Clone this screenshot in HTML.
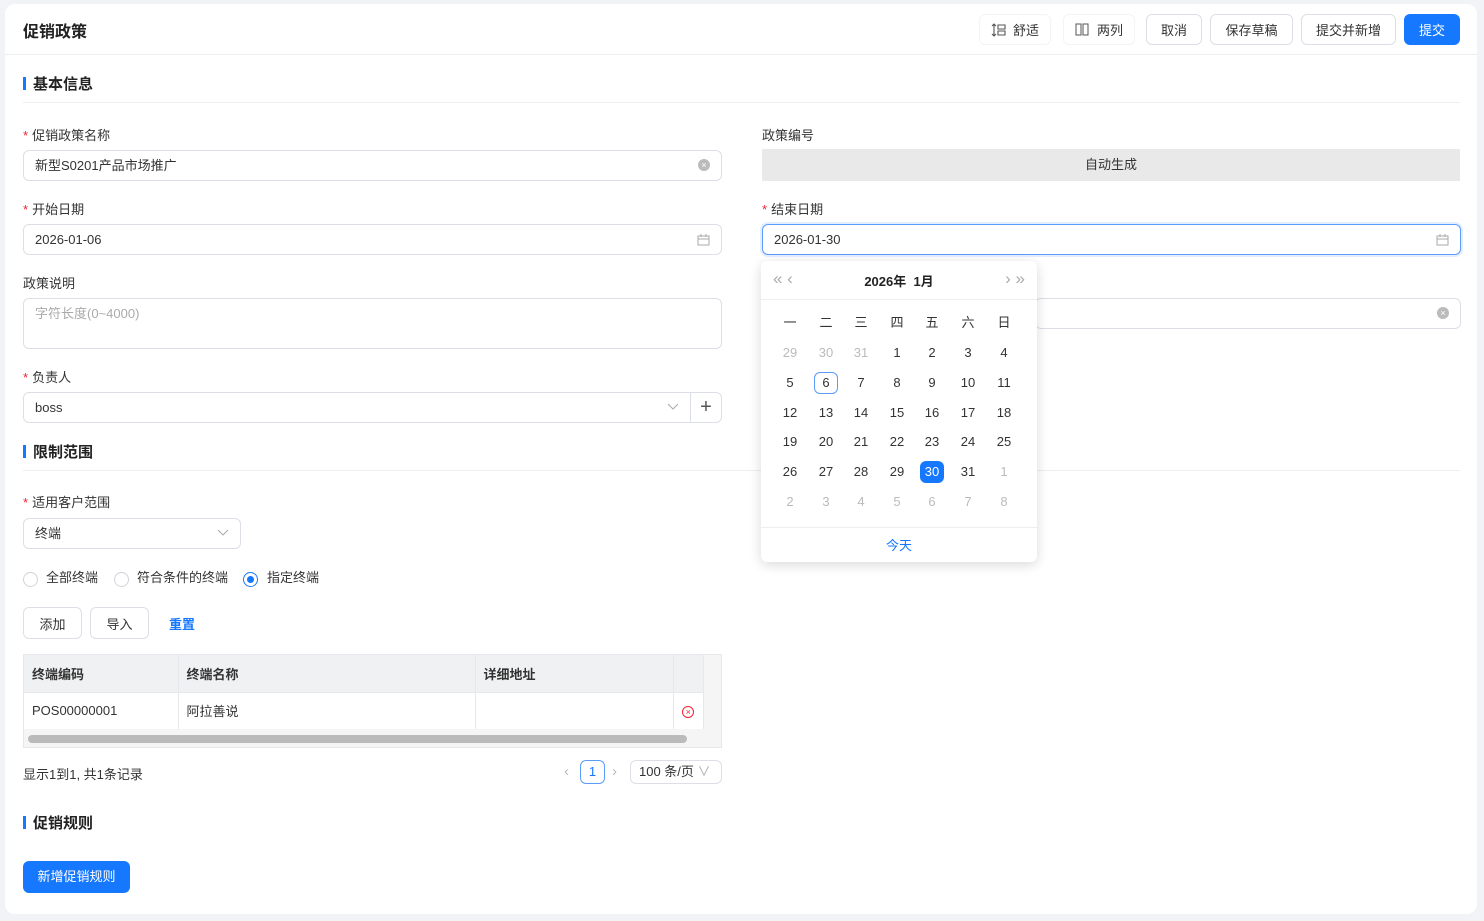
<!DOCTYPE html>
<html><head><meta charset="utf-8"><style>
*{box-sizing:border-box;margin:0;padding:0}
body{width:1484px;height:921px;background:#f2f3f6;font-family:"Liberation Sans","Noto Sans CJK SC",sans-serif;font-size:13px;color:#333;position:relative;overflow:hidden}
.card{position:absolute;left:5px;top:4px;width:1472px;height:910px;background:#fff;border-radius:10px}
.a{position:absolute}
.hdr{left:0;top:0;width:1472px;height:51px;border-bottom:1px solid #eceef2}
.btn{position:absolute;top:10px;height:31px;border:1px solid #dcdfe6;border-radius:6px;background:#fff;font-size:13px;color:#333;display:flex;align-items:center;justify-content:center}
.sec{font-size:15px;font-weight:bold;color:#222;padding-left:10px}
.sec:before{content:"";position:absolute;left:0;top:4px;width:3px;height:13px;background:#1677ff}
.line{height:1px;background:#eceef2}
.lbl{font-size:13px;color:#333}
.lbl i{color:#f5222d;font-style:normal;margin-right:4px}
.inp{position:absolute;height:31px;border:1px solid #dcdfe6;border-radius:6px;background:#fff;padding-left:11px;line-height:29px;font-size:13px;color:#333}
.cal{position:absolute;left:761px;top:261px;width:276px;height:301px;background:#fff;border-radius:6px;box-shadow:0 3px 12px rgba(0,0,0,.15)}
.cal .c{position:absolute;width:24px;height:22px;line-height:22px;text-align:center;font-size:13px;color:#333}
.cal .g{color:#bbb}
.radio{position:absolute;top:568px;width:15px;height:15px;border:1px solid #d0d3da;border-radius:50%}
th,td{border-right:1px solid #e6e8eb;text-align:left;padding-left:8px;font-size:13px}
</style></head><body>
<div class="card">
 <div class="a hdr"></div>
 <div class="a" style="left:18px;top:14px;font-size:16px;font-weight:bold;color:#222">促销政策</div>
 <div class="btn" style="left:974px;width:72px;border-color:#f3f4f6"><svg width="16" height="14" viewBox="0 0 16 14" style="margin-right:6px"><path d="M3 1v12M1 3l2-2 2 2M1 11l2 2 2-2M7 2h7v4H7zM7 8h7v4H7z" stroke="#555" fill="none" stroke-width="1.1"/></svg>舒适</div>
 <div class="btn" style="left:1058px;width:72px;border-color:#f3f4f6"><svg width="14" height="13" viewBox="0 0 14 13" style="margin-right:8px"><rect x="1" y="1" width="5" height="11" stroke="#555" fill="none"/><rect x="8" y="1" width="5" height="11" stroke="#555" fill="none"/></svg>两列</div>
 <div class="btn" style="left:1141px;width:56px">取消</div>
 <div class="btn" style="left:1205px;width:83px">保存草稿</div>
 <div class="btn" style="left:1296px;width:95px">提交并新增</div>
 <div class="btn" style="left:1399px;width:56px;background:#1677ff;border-color:#1677ff;color:#fff">提交</div>

 <div class="a sec" style="left:18px;top:69px">基本信息</div>
 <div class="a line" style="left:18px;top:98px;width:1437px"></div>

 <div class="a lbl" style="left:18px;top:121px"><i>*</i>促销政策名称</div>
 <div class="inp" style="left:18px;top:146px;width:699px">新型S0201产品市场推广<span style="position:absolute;right:11px;top:8px;width:12px;height:12px;border-radius:50%;background:#bbb;color:#fff;font-size:9px;line-height:12px;text-align:center">×</span></div>
 <div class="a lbl" style="left:757px;top:121px">政策编号</div>
 <div class="a" style="left:757px;top:145px;width:698px;height:32px;background:#e9e9e9;text-align:center;line-height:32px;color:#333">自动生成</div>

 <div class="a lbl" style="left:18px;top:195px"><i>*</i>开始日期</div>
 <div class="inp" style="left:18px;top:220px;width:699px">2026-01-06<svg style="position:absolute;right:11px;top:9px" width="13" height="12" viewBox="0 0 13 12"><rect x="1" y="2" width="11" height="9" fill="none" stroke="#aaa"/><path d="M1 5h11M4 0v3M9 0v3" stroke="#aaa"/></svg></div>
 <div class="a lbl" style="left:757px;top:195px"><i>*</i>结束日期</div>
 <div class="inp" style="left:757px;top:220px;width:699px;border-color:#5b9cf8;box-shadow:0 0 0 2px #e3eeff">2026-01-30<svg style="position:absolute;right:11px;top:9px" width="13" height="12" viewBox="0 0 13 12"><rect x="1" y="2" width="11" height="9" fill="none" stroke="#aaa"/><path d="M1 5h11M4 0v3M9 0v3" stroke="#aaa"/></svg></div>

 <div class="a lbl" style="left:18px;top:269px">政策说明</div>
 <div class="inp" style="left:18px;top:294px;width:699px;height:51px;color:#aaa;line-height:29px">字符长度(0~4000)</div>
 <div class="inp" style="left:1030px;top:294px;width:426px"><span style="position:absolute;right:11px;top:8px;width:12px;height:12px;border-radius:50%;background:#bbb;color:#fff;font-size:9px;line-height:12px;text-align:center">×</span></div>

 <div class="a lbl" style="left:18px;top:363px"><i>*</i>负责人</div>
 <div class="inp" style="left:18px;top:388px;width:699px">boss<svg style="position:absolute;right:42px;top:10px" width="12" height="8" viewBox="0 0 12 8"><path d="M1 1l5 5 5-5" stroke="#aaa" fill="none"/></svg><span style="position:absolute;right:0;top:0;width:31px;height:29px;border-left:1px solid #dcdfe6;text-align:center;font-size:20px;line-height:28px;color:#555">+</span></div>

 <div class="a sec" style="left:18px;top:437px">限制范围</div>
 <div class="a line" style="left:18px;top:466px;width:1437px"></div>
 <div class="a lbl" style="left:18px;top:488px"><i>*</i>适用客户范围</div>
 <div class="inp" style="left:18px;top:514px;width:218px">终端<svg style="position:absolute;right:11px;top:10px" width="12" height="8" viewBox="0 0 12 8"><path d="M1 1l5 5 5-5" stroke="#aaa" fill="none"/></svg></div>
 <div class="radio" style="left:18px"></div><div class="a" style="left:41px;top:563px">全部终端</div>
 <div class="radio" style="left:109px"></div><div class="a" style="left:132px;top:563px">符合条件的终端</div>
 <div class="radio" style="left:238px;border-color:#1677ff"><div style="margin:3px;width:7px;height:7px;border-radius:50%;background:#1677ff"></div></div><div class="a" style="left:262px;top:563px">指定终端</div>

 <div class="btn" style="left:18px;top:603px;width:59px;height:32px">添加</div>
 <div class="btn" style="left:85px;top:603px;width:59px;height:32px">导入</div>
 <div class="a" style="left:164px;top:610px;color:#1677ff;font-weight:bold">重置</div>

 <div class="a" style="left:18px;top:650px;width:699px;height:94px;border:1px solid #e6e8eb;background:#f5f5f5">
  <table style="border-collapse:collapse;width:680px;background:#fff">
   <tr style="height:37px;background:#f0f1f3;font-weight:bold"><th style="width:154px">终端编码</th><th style="width:297px">终端名称</th><th style="width:198px">详细地址</th><th></th></tr>
   <tr style="height:37px;border-top:1px solid #e6e8eb"><td>POS00000001</td><td>阿拉善说</td><td></td><td style="text-align:center;padding:0"><span style="display:inline-block;width:12px;height:12px;border:1px solid #f5222d;border-radius:50%;color:#f5222d;font-size:9px;line-height:10px;text-align:center">×</span></td></tr>
  </table>
  <div class="a" style="left:4px;top:80px;width:659px;height:8px;border-radius:4px;background:#bbb"></div>
 </div>
 <div class="a" style="left:18px;top:760px">显示1到1, 共1条记录</div>
 <div class="a" style="left:559px;top:759px;color:#bbb;font-size:15px">‹</div>
 <div class="a" style="left:575px;top:756px;width:25px;height:24px;border:1px solid #5b9cf8;border-radius:6px;text-align:center;line-height:22px;color:#1677ff">1</div>
 <div class="a" style="left:607px;top:759px;color:#bbb;font-size:15px">›</div>
 <div class="a" style="left:625px;top:756px;width:92px;height:24px;border:1px solid #dcdfe6;border-radius:6px;padding-left:8px;line-height:22px">100 条/页 <span style="color:#aaa">∨</span></div>

 <div class="a sec" style="left:18px;top:808px">促销规则</div>
 <div class="a" style="left:18px;top:857px;width:107px;height:32px;background:#1677ff;border-radius:6px;color:#fff;text-align:center;line-height:32px">新增促销规则</div>
</div>

<div class="cal">
 <div class="a" style="left:12px;top:8px;color:#aaa;font-size:17px">«&nbsp;‹</div>
 <div class="a" style="left:0;width:276px;top:10px;text-align:center;font-weight:bold;font-size:13px;color:#222">2026年&nbsp; 1月</div>
 <div class="a" style="right:12px;top:8px;color:#aaa;font-size:17px">›&nbsp;»</div>
 <div class="a line" style="left:0;top:38px;width:276px"></div>
 <div class="a line" style="left:0;top:266px;width:276px"></div>
 <div class="a" style="left:0;width:276px;top:274px;text-align:center;color:#1677ff">今天</div>
 <div id="g"></div>
</div>
<script>
var xs=[29,65,100,136,171,207,243],ys=[62,92,122,152,181,211,241];
var h='';['一','二','三','四','五','六','日'].forEach(function(t,i){h+='<div class="c" style="left:'+(xs[i]-12)+'px;top:'+(ys[0]-11)+'px">'+t+'</div>'});
var d=[29,30,31];for(var i=1;i<=31;i++)d.push(i);for(i=1;i<=8;i++)d.push(i);
d.forEach(function(n,k){var r=Math.floor(k/7)+1,c=k%7;var g=(k<3||k>33);var st='left:'+(xs[c]-12)+'px;top:'+(ys[r]-11)+'px;';var cl='c'+(g?' g':'');
if(k==8)st+='border:1px solid #5b9cf8;border-radius:6px;line-height:20px;';
if(k==32)st+='background:#1677ff;color:#fff;border-radius:6px;';
h+='<div class="'+cl+'" style="'+st+'">'+n+'</div>'});
document.getElementById('g').innerHTML=h;
</script>
</body></html>
